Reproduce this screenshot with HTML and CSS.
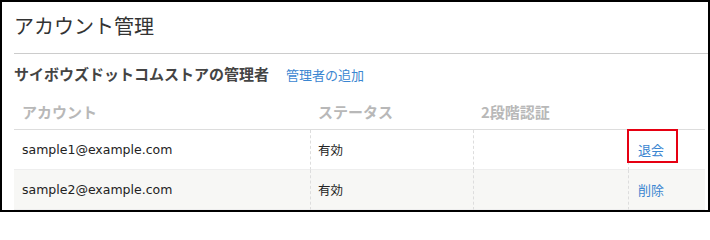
FILE: index.html
```html
<!DOCTYPE html>
<html lang="ja">
<head>
<meta charset="utf-8">
<title>アカウント管理</title>
<link rel="stylesheet" href="styles.css">
</head>
<body>
<div class="frame">
  <h1 class="title">アカウント管理</h1>
  <hr class="rule">
  <div class="section-head">
    <h2 class="section-title">サイボウズドットコムストアの管理者</h2>
    <a class="link add-link" href="#">管理者の追加</a>
  </div>
  <div class="table">
    <div class="row head">
      <div class="cell">アカウント</div>
      <div class="cell">ステータス</div>
      <div class="cell">2段階認証</div>
      <div class="cell"></div>
    </div>
    <div class="row body">
      <div class="cell">sample1@example.com</div>
      <div class="cell">有効</div>
      <div class="cell"></div>
      <div class="cell action"><a class="link" href="#">退会</a><span class="highlight"></span></div>
    </div>
    <div class="row body alt">
      <div class="cell">sample2@example.com</div>
      <div class="cell">有効</div>
      <div class="cell"></div>
      <div class="cell action"><a class="link" href="#">削除</a></div>
    </div>
  </div>
</div>
</body>
</html>
```

FILE: styles.css
```css
html, body {
  margin: 0;
  padding: 0;
  background: #fff;
}

.frame {
  width: 710px;
  height: 212px;
  box-sizing: border-box;
  border: 2px solid #000;
  padding-left: 12px;
  overflow: hidden;
  font-family: "DejaVu Sans", "Noto Sans CJK JP", sans-serif;
  color: #222;
}

.title {
  margin: 0;
  padding-top: 10px;
  font-size: 20px;
  line-height: 28px;
  font-weight: normal;
  color: #333;
  font-family: "Noto Sans CJK JP", sans-serif;
}

.rule {
  margin: 13px 0 0 0;
  height: 0;
  border: 0;
  border-top: 1px solid #ccc;
}

.section-head {
  margin-top: 10px;
  display: flex;
  align-items: baseline;
  gap: 17px;
  height: 20px;
}

.section-title {
  margin: 0;
  font-size: 15px;
  line-height: 20px;
  font-weight: bold;
  color: #444;
  font-family: "Noto Sans CJK JP", sans-serif;
}

.link {
  color: #3b86d1;
  text-decoration: none;
  font-family: "Noto Sans CJK JP", sans-serif;
  font-size: 13px;
}

.add-link {
  line-height: 20px;
}

.table {
  margin-top: 10px;
  margin-right: 3px;
}

.row {
  display: grid;
  grid-template-columns: 296px 163px 155px 1fr;
}

.cell {
  display: flex;
  align-items: center;
  padding-left: 8px;
  box-sizing: border-box;
  position: relative;
}

.head .cell {
  height: 36px;
  border-bottom: 1px solid #ddd;
  font-size: 15px;
  font-weight: bold;
  color: #b8b8b8;
  font-family: "Noto Sans CJK JP", sans-serif;
}

.body .cell {
  height: 40px;
  border-bottom: 1px solid #eee;
  font-size: 12.5px;
}

.body .cell + .cell {
  border-left: 1px dashed #ddd;
  padding-left: 7px;
}

.body .cell.action {
  padding-left: 9px;
}

.alt {
  background: #f7f7f5;
}

.highlight {
  position: absolute;
  left: -2px;
  top: -1px;
  width: 51px;
  height: 34px;
  box-sizing: border-box;
  border: 2px solid #e60012;
}
```
